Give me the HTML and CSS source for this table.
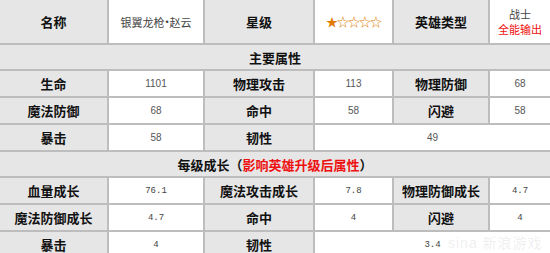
FILE: index.html
```html
<!DOCTYPE html>
<html lang="zh">
<head>
<meta charset="utf-8">
<link rel="stylesheet" href="styles.css">
</head>
<body>
<div class="sheet">
  <div class="grid">
    <div class="c lab tall">名称</div>
    <div class="c val tall name">银翼龙枪<span class="dot">•</span>赵云</div>
    <div class="c lab tall">星级</div>
    <div class="c val tall stars">★☆☆☆☆</div>
    <div class="c lab tall">英雄类型</div>
    <div class="c val tall type"><span>战士</span><span class="red">全能输出</span></div>

    <div class="c sec">主要属性</div>

    <div class="c lab">生命</div><div class="c val">1101</div>
    <div class="c lab">物理攻击</div><div class="c val">113</div>
    <div class="c lab">物理防御</div><div class="c val">68</div>

    <div class="c lab">魔法防御</div><div class="c val">68</div>
    <div class="c lab">命中</div><div class="c val">58</div>
    <div class="c lab">闪避</div><div class="c val">58</div>

    <div class="c lab">暴击</div><div class="c val">58</div>
    <div class="c lab">韧性</div><div class="c val span3">49</div>

    <div class="c sec">每级成长（<span class="red">影响英雄升级后属性</span>）</div>

    <div class="c lab">血量成长</div><div class="c val mono">76.1</div>
    <div class="c lab">魔法攻击成长</div><div class="c val mono">7.8</div>
    <div class="c lab">物理防御成长</div><div class="c val mono">4.7</div>

    <div class="c lab">魔法防御成长</div><div class="c val mono">4.7</div>
    <div class="c lab">命中</div><div class="c val mono">4</div>
    <div class="c lab">闪避</div><div class="c val mono">4</div>

    <div class="c lab">暴击</div><div class="c val mono">4</div>
    <div class="c lab">韧性</div><div class="c val mono span3">3.4</div>
  </div>
  <div class="mark">sina 新浪游戏</div>
</div>
</body>
</html>
```
FILE: styles.css
```css
html, body {
  margin: 0;
  padding: 0;
  background: #ffffff;
  overflow: hidden;
}
.sheet {
  position: relative;
  width: 550px;
  height: 253px;
  overflow: hidden;
}
.grid {
  display: grid;
  grid-template-columns: 107px 94px 108px 77px 94px 60px;
  grid-template-rows: 43px 24px 25px 25px 25px 24px 25px 25px 25px;
  gap: 2px;
  background: #bdbdbd;
  width: 550px;
}
.c {
  display: flex;
  align-items: center;
  justify-content: center;
  font-family: "Noto Sans CJK SC", "Liberation Sans", sans-serif;
}
.lab {
  background: #e6e6e6;
  color: #111;
  font-weight: bold;
  font-size: 13px;
}
.val {
  background: #ffffff;
  color: #555;
  font-family: "Liberation Sans", "Noto Sans CJK SC", sans-serif;
  font-size: 10px;
}
.sec {
  grid-column: 1 / -1;
  background: #e6e6e6;
  color: #111;
  font-weight: bold;
  font-size: 13px;
}
.span3 {
  grid-column: 4 / -1;
}
.name {
  font-family: "Noto Sans CJK SC", sans-serif;
  font-size: 11px;
  color: #444;
}
.dot {
  font-family: "Liberation Sans", sans-serif;
  font-size: 9px;
  margin: 0 1px;
}
.stars {
  color: #e07b00;
  font-family: "Noto Sans CJK SC", sans-serif;
  font-size: 12px;
  letter-spacing: -1px;
}
.type {
  flex-direction: column;
  font-family: "Noto Sans CJK SC", sans-serif;
  font-size: 11px;
  line-height: 15px;
  color: #444;
}
.red {
  color: #ee1111;
}
.mono {
  font-family: "Liberation Mono", monospace;
  font-size: 9px;
  color: #444;
}
.mark {
  position: absolute;
  left: 448px;
  top: 232px;
  font-family: "Liberation Sans", "Noto Sans CJK SC", sans-serif;
  font-size: 14px;
  color: rgba(210, 210, 210, 0.35);
  letter-spacing: 1px;
  pointer-events: none;
}
```
